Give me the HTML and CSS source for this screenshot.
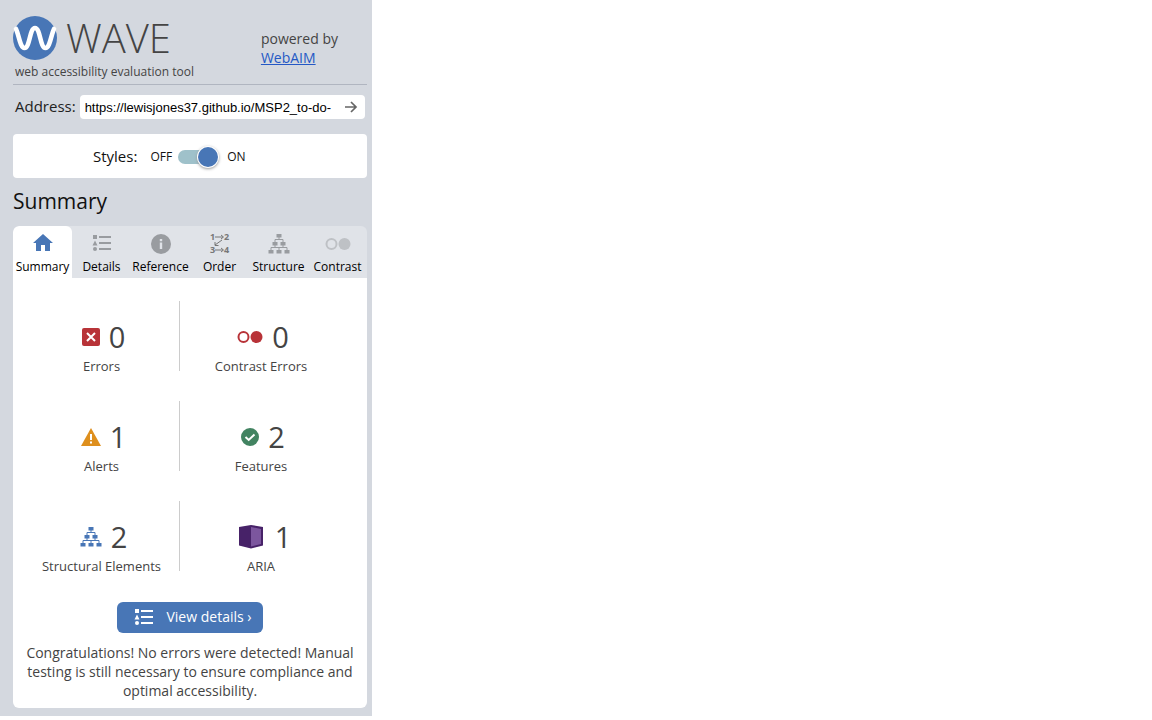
FILE: index.html
```html
<!DOCTYPE html>
<html lang="en">
<head>
<meta charset="utf-8">
<title>WAVE web accessibility evaluation tool</title>
<link rel="stylesheet" href="styles.css">
</head>
<body>
<svg class="sprite" aria-hidden="true">
  <symbol id="list" viewBox="0 0 20 18">
    <path d="M1 1h4v4H1zM3 6.5l2.5 5h-5zM7 2h12v2H7zM7 8h12v2H7zM7 14h12v2H7z"/><circle cx="3" cy="15" r="2"/>
  </symbol>
  <symbol id="tree" viewBox="0 0 22 20">
    <path d="M8.500 0h5v3.500h-5zM4.500 8h5v3.500h-5zM12.500 8h5v3.500h-5zM.5 16h5v3.500h-5zM8.500 16h5v3.500h-5zM16.500 16h5v3.500h-5z"/>
    <path d="M11 3v2.500M7 8V5.500h8V8M7 11v2.500M15 11v2.500M3 16v-2.500h16V16M11 13.500V16" fill="none" stroke="currentColor"/>
  </symbol>
  <symbol id="circles" viewBox="0 0 26 14">
    <circle cx="6.500" cy="7" r="5" fill="none" stroke="currentColor" stroke-width="2"/><circle cx="19.500" cy="7" r="6"/>
  </symbol>
</svg>
<aside class="sidebar">
  <header class="header">
    <div>
      <h1 class="brand">
        <svg class="logo" viewBox="0 0 44 44" aria-hidden="true"><circle cx="22" cy="22" r="22" fill="#4876b6"/><path d="M3 13C6 19 7 32 11.500 32C17 32 16.500 12 22 12C27.500 12 27 32 32.500 32C37 32 38 19 41 13" fill="none" stroke="#fff" stroke-width="4.600" stroke-linecap="round"/></svg>
        <span>WAVE</span>
      </h1>
      <p class="tagline">web accessibility evaluation tool</p>
    </div>
    <p class="powered">powered by<br><a href="#">WebAIM</a></p>
  </header>
  <form class="address">
    <label for="url">Address:</label>
    <div class="field">
      <input id="url" type="text" value="https://lewisjones37.github.io/MSP2_to-do-">
      <button type="button" aria-label="Go"><svg width="14" height="14" viewBox="0 0 14 14" aria-hidden="true"><path d="M1 7h11M7 2l5 5-5 5" fill="none" stroke="#666" stroke-width="1.700"/></svg></button>
    </div>
  </form>
  <div class="styles">
    <label class="styles-label" for="toggle">Styles:</label>
    <span>OFF</span>
    <input id="toggle" class="toggle" type="checkbox" role="switch" checked>
    <span>ON</span>
  </div>
  <h2 class="title">Summary</h2>
  <nav class="tabs">
    <button class="tab active" type="button"><svg width="20" height="20" viewBox="0 0 20 20" aria-hidden="true"><path d="M10 0L0 9h3v8h5v-6h4v6h5V9h3z"/></svg>Summary</button>
    <button class="tab" type="button"><svg width="20" height="20" aria-hidden="true"><use href="#list" width="20" height="18"/></svg>Details</button>
    <button class="tab" type="button"><svg width="20" height="20" viewBox="0 0 20 20" aria-hidden="true"><circle cx="10" cy="10" r="10"/><path d="M8.800 5h2.400v2.200H8.800zM8.800 8.500h2.400V15H8.800z" fill="#e0e3e8"/></svg>Reference</button>
    <button class="tab order" type="button"><svg width="20" height="20" viewBox="0 0 20 20" aria-hidden="true"><g class="digits"><text x="0" y="6">1</text><text x="14" y="6">2</text><text x="0" y="19">3</text><text x="14" y="19">4</text></g><path d="M5 3h8M11 1l2.500 2L11 5M5 16h8M11 14l2.500 2L11 18M12 6l-7 5M5 8v3.500h3.500" fill="none" stroke="currentColor"/></svg>Order</button>
    <button class="tab" type="button"><svg width="22" height="20" aria-hidden="true"><use href="#tree"/></svg>Structure</button>
    <button class="tab contrast" type="button"><svg width="26" height="20" aria-hidden="true"><use href="#circles"/></svg>Contrast</button>
  </nav>
  <main class="panel">
    <ul class="stats">
      <li><div class="count"><svg width="18" height="18" viewBox="0 0 18 18" aria-hidden="true"><rect width="18" height="18" rx="2" fill="#b83338"/><path d="M5 5l8 8M13 5l-8 8" stroke="#fff" stroke-width="2"/></svg>0</div>Errors</li>
      <li><div class="count"><svg class="red" width="26" height="14" aria-hidden="true"><use href="#circles"/></svg>0</div>Contrast Errors</li>
      <li><div class="count"><svg width="20" height="18" viewBox="0 0 20 18" aria-hidden="true"><path d="M10 0l10 18H0z" fill="#de8f1d"/><path d="M9 6h2v6H9zM9 13.500h2v2H9z" fill="#fff"/></svg>1</div>Alerts</li>
      <li><div class="count"><svg width="18" height="18" viewBox="0 0 18 18" aria-hidden="true"><circle cx="9" cy="9" r="9" fill="#428361"/><path d="M4.500 9l3.200 3L13.500 6.500" fill="none" stroke="#fff" stroke-width="2"/></svg>2</div>Features</li>
      <li><div class="count"><svg class="blue" width="22" height="20" aria-hidden="true"><use href="#tree"/></svg>2</div>Structural Elements</li>
      <li><div class="count wide"><svg width="24" height="24" viewBox="0 0 24 24" aria-hidden="true"><path d="M12 0l12 2v18.500L12 23.500 0 20.500V2z" fill="#472268"/><path d="M12 2l10 2v15L12 21.500z" fill="#7c569e"/></svg>1</div>ARIA</li>
    </ul>
    <button class="details" type="button"><svg width="20" height="18" aria-hidden="true"><use href="#list"/></svg>View details ›</button>
    <p class="message">Congratulations! No errors were detected! Manual testing is still necessary to ensure compliance and optimal accessibility.</p>
  </main>
</aside>
</body>
</html>
```
FILE: styles.css
```css
* { box-sizing: border-box; }
body { margin: 0; background: #fff; color: #444; font: 14px/19px "Open Sans", sans-serif; }
h1, h2, p, ul { margin: 0; padding: 0; }
button { border: 0; background: none; padding: 0; font: inherit; color: inherit; }
svg { fill: currentColor; flex: none; overflow: visible; }
.sprite { display: none; }
.sidebar { width: 372px; padding: 16px 5px 8px 13px; background: #d4d8df; }
.header { display: flex; gap: 67px; padding-bottom: 3px; border-bottom: 1px solid #b0b5c0; }
.brand { display: flex; align-items: center; gap: 9px; height: 44px; font-size: 40px; line-height: 46px; font-weight: 300; }
.logo { width: 44px; height: 44px; }
.tagline { padding: 3px 0 0 2px; font-size: 12px; line-height: 18px; white-space: nowrap; }
.powered { padding-top: 13px; }
.powered a { color: #2458c5; }
.address { display: flex; align-items: center; gap: 4px; padding: 10px 2px 15px; color: #222; font-size: 15px; }
.address label { margin-top: -2px; }
.field { display: flex; flex: 1; height: 24px; border-radius: 4px; background: #fff; }
.field input { flex: 1; min-width: 0; padding: 0 0 0 5px; border: 0; background: none; color: #000; font: 13px "Liberation Sans", sans-serif; }
.field button { display: flex; align-items: center; justify-content: center; width: 28px; }
.styles { display: flex; align-items: center; gap: 6px; height: 44px; padding: 0 0 0 80px; border-radius: 4px; background: #fff; color: #111; font-size: 12px; }
.styles-label { margin-right: 7px; font-size: 15px; }
.toggle { appearance: none; display: flex; align-items: center; justify-content: flex-end; width: 40px; height: 14px; margin: 2px 3px 0 0; border-radius: 7px; background: #9fc1ca; }
.toggle::before { content: ""; width: 20px; height: 20px; border-radius: 50%; background: #4876b6; box-shadow: 0 0 0 1px #fff, 0 1px 3px 1px #999; }
.title { padding: 8px 0 10px; color: #111; font-size: 21px; line-height: 30px; font-weight: 400; }
.tabs { display: flex; border-radius: 6px 6px 0 0; background: #e0e3e8; overflow: hidden; }
.tab { display: flex; flex: 1 1 0; min-width: 0; flex-direction: column; align-items: center; gap: 5px; height: 52px; padding-top: 8px; color: #000; font-size: 12px; line-height: 16px; white-space: nowrap; }
.tab svg { color: #999ca0; }
.tab.active { border-radius: 6px 6px 0 0; background: #fff; }
.tab.active svg { color: #4876b6; }
.tab.contrast svg { color: #bec1c5; }
.tab.order svg { color: #777; }
.digits { font: 700 9px "Open Sans", sans-serif; }
.panel { display: flex; flex-direction: column; align-items: center; padding: 23px 9px 8px; border-radius: 0 0 6px 6px; background: #fff; }
.stats { display: grid; grid-template-columns: 158px 162px; align-self: flex-start; row-gap: 30px; list-style: none; }
.stats li { height: 70px; padding-top: 16px; font-size: 13px; text-align: center; }
.stats li:nth-child(odd) { padding-left: 2px; border-right: 1px solid #ccc; }
.count { display: flex; align-items: center; justify-content: center; gap: 9px; height: 40px; padding-left: 4px; font-size: 29px; line-height: 40px; }
.count.wide { gap: 12px; padding-left: 8px; }
.red { color: #b83338; }
.blue { color: #4876b6; }
.details { display: flex; align-items: center; gap: 12px; height: 31px; margin-top: 31px; padding: 0 11px 2px 17px; border-radius: 6px; background: #4876b6; color: #fff; }
.message { padding: 10px 0 0; text-align: center; }
```
